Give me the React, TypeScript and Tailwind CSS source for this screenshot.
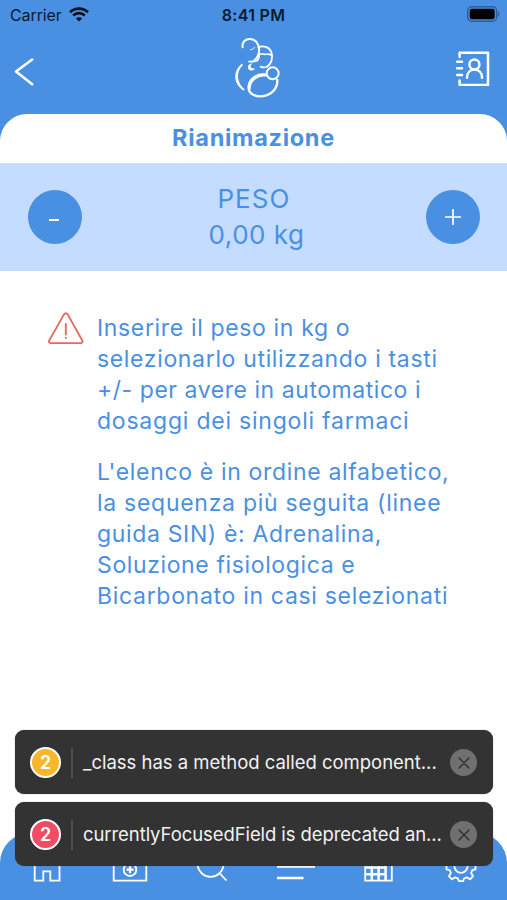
import type { ReactNode } from "react";

interface Line {
  text: string;
  className: string;
}

interface Warning {
  count: number;
  message: string;
  badge: string;
  tracking: string;
}

const firstParagraph: Line[] = [
  { text: "Inserire il peso in kg o", className: "tracking-[0.65px]" },
  { text: "selezionarlo utilizzando i tasti", className: "tracking-[0.66px]" },
  { text: "+/- per avere in automatico i", className: "tracking-[0.55px]" },
  { text: "dosaggi dei singoli farmaci", className: "tracking-[0.78px]" },
];

const secondParagraph: Line[] = [
  { text: "L'elenco è in ordine alfabetico,", className: "tracking-[0.66px]" },
  { text: "la sequenza più seguita (linee", className: "tracking-[0.72px]" },
  { text: "guida SIN) è: Adrenalina,", className: "tracking-[0.65px]" },
  { text: "Soluzione fisiologica e", className: "tracking-[0.62px]" },
  { text: "Bicarbonato in casi selezionati", className: "tracking-[0.69px]" },
];

const warnings: Warning[] = [
  {
    count: 2,
    message: "_class has a method called component...",
    badge: "bg-[#f8b62d]",
    tracking: "tracking-[-0.02px]",
  },
  {
    count: 2,
    message: "currentlyFocusedField is deprecated an...",
    badge: "bg-[#f04c66]",
    tracking: "tracking-[-0.08px]",
  },
];

function StatusBar() {
  return (
    <div className="grid h-[30px] grid-cols-3 items-center pr-[7px] pl-[10px] text-[#0b1a2e]">
      <div className="flex items-center gap-[7px]">
        <span className="text-[16px] tracking-[-0.1px]">Carrier</span>
        <svg width="20" height="15" viewBox="0 0 20 15" fill="none" stroke="#06111f" strokeWidth="2.6" className="-mt-[2px]">
          <path d="M1 5.2C6 .4 14 .4 19 5.2" />
          <path d="M4.2 8.5c3.4-3.2 8.2-3.2 11.6 0" />
          <path d="M10 14.6 6.9 11.4c1.8-1.6 4.4-1.6 6.2 0Z" fill="#06111f" stroke="none" />
        </svg>
      </div>
      <div className="-ml-[3px] text-center text-[16px] font-semibold tracking-[0.3px]">8:41 PM</div>
      <div className="flex justify-end pb-[2px]">
        <svg width="33" height="16" viewBox="0 0 33 16">
          <rect x="0.7" y="0.7" width="29" height="14.6" rx="4.2" fill="none" stroke="#2f5c96" strokeWidth="1.4" />
          <rect x="2.7" y="2.7" width="25" height="10.6" rx="2.4" fill="#000" />
          <path d="M31 5.5c1.8.6 1.8 4.4 0 5Z" fill="#2f5c96" />
        </svg>
      </div>
    </div>
  );
}

function Logo() {
  return (
    <svg width="50" height="64" viewBox="66 106 150 192" fill="none" stroke="#fff" strokeLinecap="round">
      <path d="M98 143c-3-17 9-26 24-25 21 2 30 27 23 47-3 9-8 16-16 20" strokeWidth="6" />
      <path d="M121 150c6 0 11-3 13-7" strokeWidth="2.5" />
      <path d="M145 143c14-6 32-2 39 14 7 18-1 38-15 45-6 2-11 2-17-1" strokeWidth="5.5" />
      <path d="M149 163c4-2 8-1 15 1 8 0 14-2 19 2M149 163c-3 12-2 18-9 21-8 3-17 1-23 2" strokeWidth="5" />
      <path d="M121 195c-4 7 0 12 8 14-6 3-13 0-13-6 0-4 2-7 5-8Z" fill="#fff" strokeWidth="5" />
      <path d="M97 194c-22 22-21 55 5 77-30-20-32-54-5-77Z" fill="#fff" strokeWidth="5" />
      <circle cx="188" cy="221" r="18" strokeWidth="6" />
      <path d="M170 226c-25-6-51 9-54 34-2 20 16 31 37 30 29-1 50-22 49-49" strokeWidth="7" />
      <path d="M166 226c-26-3-49 18-48 39" strokeWidth="9" />
    </svg>
  );
}

function Header() {
  return (
    <header className="flex h-[84px] items-start justify-between pl-[14px] pr-[17px]">
      <button aria-label="Indietro" className="mt-[28px] w-[60px]">
        <svg width="22" height="30" viewBox="0 0 22 30" fill="none" stroke="#fff" strokeWidth="2.5" strokeLinecap="round" strokeLinejoin="round">
          <path d="M18.2 1.5 2 13.5 18.2 26.2" />
        </svg>
      </button>
      <div className="mt-[5px] ml-[9px]">
        <Logo />
      </div>
      <button aria-label="Contatti" className="flex w-[60px] justify-end pt-[21px]">
        <svg width="35" height="35" viewBox="0 0 35 35" fill="none" stroke="#fff" strokeWidth="2.5" strokeLinecap="round" strokeLinejoin="round">
          <path d="M4.6 6V1.8H33v32.1H4.6v-4.4" />
          <path d="M2.2 10.7H7M2.2 17.3H7M2.2 23.9H7" />
          <circle cx="19.4" cy="13.5" r="5" />
          <path d="M12 26.8c0-5.2 3.2-8.2 7.4-8.2s7.6 3 7.6 8.2" />
        </svg>
      </button>
    </header>
  );
}

function RoundButton({ children }: { children: ReactNode }) {
  return (
    <button className="flex size-[54px] items-center justify-center rounded-full bg-[#4a90e2] text-white">
      {children}
    </button>
  );
}

function Paragraph({ lines }: { lines: Line[] }) {
  return (
    <p>
      {lines.map((line) => (
        <span key={line.text} className={`block whitespace-nowrap ${line.className}`}>
          {line.text}
        </span>
      ))}
    </p>
  );
}

function Toast({ count, message, badge, tracking }: Warning) {
  return (
    <div className="flex h-[64px] items-center rounded-[9px] bg-[#333] pt-px pr-[16px] pl-[15px] shadow-[0_0_1px_#555]">
      <div className={`flex size-[31px] shrink-0 items-center justify-center rounded-full border-[2.5px] border-white text-[18px] font-semibold text-white ${badge}`}>
        {count}
      </div>
      <div className="ml-[10px] h-[30px] w-[2px] shrink-0 bg-[#4d4d4d]" />
      <div className={`mt-px ml-[10px] w-0 grow text-[18.5px] whitespace-nowrap text-[#f2f2f2] ${tracking}`}>{message}</div>
      <button aria-label="Chiudi" className="flex size-[27px] shrink-0 items-center justify-center rounded-full bg-[#707070]">
        <svg width="12" height="12" viewBox="0 0 12 12" stroke="#333" strokeWidth="1.5" strokeLinecap="round">
          <path d="M1 1l10 10M11 1 1 11" />
        </svg>
      </button>
    </div>
  );
}

function NavIcon({ children }: { children: ReactNode }) {
  return (
    <button className="flex justify-center">
      <svg width="40" height="40" viewBox="0 0 40 40" fill="none" stroke="#fff" strokeWidth="1.8">
        {children}
      </svg>
    </button>
  );
}

function BottomNav() {
  return (
    <nav className="grid h-[67px] grid-cols-6 rounded-t-[30px] bg-[#4a90e2] pt-[13px] pr-[4px] pl-[6px]">
      <NavIcon>
        <path d="M7.7 14v20.7h8.6V25.3h7v9.4h9.2V14L20 6Z" />
      </NavIcon>
      <NavIcon>
        <path d="M3.7 13h32.6v21.7H3.7ZM14 13V8h12v5" />
        <circle cx="20" cy="23.7" r="6.3" />
        <path d="M20 20.3v7M16.5 23.7h7" strokeWidth="2.2" />
      </NavIcon>
      <NavIcon>
        <circle cx="17.6" cy="17.8" r="13" />
        <path d="m26.3 27 7.2 7.5" />
      </NavIcon>
      <NavIcon>
        <path d="M1 9h38M1 20.6h38M1 32h26.5" strokeWidth="2.4" />
      </NavIcon>
      <NavIcon>
        <path d="M6.2 8h26.6v26.7H6.2Z" />
        <path d="M6 15h27M6 21.5h21M6 28.2h21M12.8 15v19.5M19.6 15v19.5M26.6 15v19.5" strokeWidth="2.5" />
      </NavIcon>
      <NavIcon>
        <g transform="translate(-1 0)">
          <circle cx="20" cy="20.3" r="6.6" />
          <path
            d="M17.8 6.3h4.4l.8 3.6 2.8 1.2 3.2-2 3.1 3.1-2 3.2 1.2 2.8 3.2.9v4.3l-3.2.8-1.2 2.8 2 3.2-3.1 3.1-3.2-2-2.8 1.2-.8 2.6h-4.4l-.8-2.6-2.8-1.2-3.2 2-3.1-3.1 2-3.2-1.2-2.8-3.2-.8v-4.3l3.2-.9 1.2-2.8-2-3.2L11 9.1l3.2 2L17 9.9Z"
            strokeLinejoin="round"
          />
        </g>
      </NavIcon>
    </nav>
  );
}

export default function App() {
  return (
    <div className="relative flex h-[900px] w-[507px] flex-col overflow-hidden bg-white font-['Inter',sans-serif]">
      <div className="bg-[#4a90e2]">
        <StatusBar />
        <Header />
        <h1 className="h-[49px] rounded-t-[27px] bg-white text-center text-[23.5px] leading-[48px] font-bold tracking-[0.7px] text-[#4a90e2]">
          Rianimazione
        </h1>
      </div>

      <section className="flex h-[108px] items-center justify-between bg-[#c3dcff] pr-[27px] pl-[28px]">
        <RoundButton>
          <span className="mt-[5px] mr-[2px] h-[2px] w-[10px] bg-white" />
        </RoundButton>
        <div className="text-center text-[26px] leading-[36px] text-[#4a90e2]">
          <div className="tracking-[1.1px]">PESO</div>
          <div className="ml-[5px] tracking-[0.5px]">0,00 kg</div>
        </div>
        <RoundButton>
          <svg width="18" height="18" viewBox="0 0 18 18" stroke="#fff" strokeWidth="1.7">
            <path d="M9 1v16M1 9h16" />
          </svg>
        </RoundButton>
      </section>

      <main className="flex grow items-start gap-[13px] pt-[41px] pl-[48px]">
        <svg width="36" height="33" viewBox="0 0 36 33" fill="none" stroke="#e5695f" strokeWidth="1.9" strokeLinecap="round" strokeLinejoin="round">
          <path d="M16 2.4c.9-1.5 2.8-1.5 3.7 0l14.5 26c.8 1.5 0 2.7-1.6 2.7H2.9c-1.6 0-2.4-1.2-1.6-2.7Z" />
          <path d="M17.8 12v10.5M17.8 25.7v.2" />
        </svg>
        <div className="flex flex-col gap-[20px] pt-px text-[23px] leading-[31px] text-[#4a90e2]">
          <Paragraph lines={firstParagraph} />
          <Paragraph lines={secondParagraph} />
        </div>
      </main>

      <BottomNav />

      {/* yellow box warnings float over the navigation */}
      <div className="absolute top-[730px] right-[14px] left-[15px] flex flex-col gap-[8px]">
        {warnings.map((warning) => (
          <Toast key={warning.message} {...warning} />
        ))}
      </div>
    </div>
  );
}
